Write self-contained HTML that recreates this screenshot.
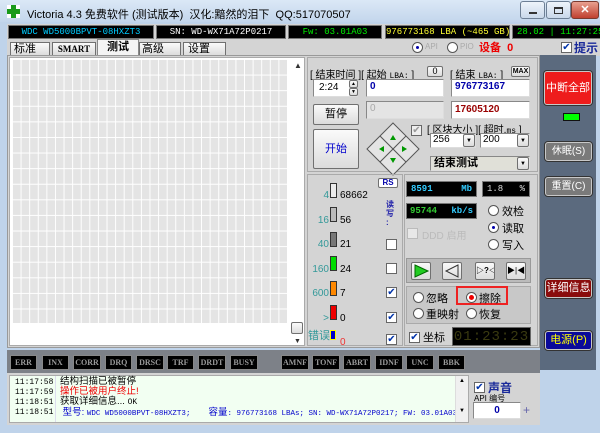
<!DOCTYPE html><html><head><meta charset="utf-8"><style>
*{margin:0;padding:0;box-sizing:border-box}
body{width:600px;height:433px;overflow:hidden;background:#bfd3ea;font-family:"Liberation Sans","Noto Sans CJK SC",sans-serif;font-size:11px;position:relative;color:#000}
.a{position:absolute}
.m{font-family:"Liberation Mono","Noto Sans CJK SC",monospace}
.blk{background:#000;border:1px solid #777;font-size:9px;text-align:center;line-height:12px;white-space:nowrap;overflow:hidden}
.btn{background:linear-gradient(#fafafa,#dcdcdc);border:1px solid #707070;border-radius:2px;text-align:center}
.inp{background:#fff;border:1px solid #888;border-right-color:#ddd;border-bottom-color:#ddd}
.rad{width:11px;height:11px;border:1px solid #555;border-radius:50%;background:#fff}
.rad.on::after{content:"";position:absolute;left:3px;top:3px;width:3px;height:3px;border-radius:50%;background:#00a}
.chk{width:11px;height:11px;border:1px solid #666;background:#fff;font-size:10px;line-height:9px;text-align:center;color:#03a}
.sb{border:1px solid #888;font-size:8px;text-align:center;line-height:13px;background:#000;color:#999;font-family:"Liberation Serif",serif;font-weight:bold;overflow:hidden}
.rb{border:1px solid #c8c8c8;border-radius:3px;color:#fff;text-align:center;font-size:11px;box-shadow:0 0 0 1px #333}
</style></head><body>
<div class="a" style="left:0;top:0;width:600px;height:22px;background:linear-gradient(#dbe8f6,#c3d6ec)"></div>
<div class="a" style="left:7px;top:5px;width:13px;height:13px;background:#fff"></div>
<div class="a" style="left:11px;top:5px;width:5px;height:13px;background:#1a9a1a"></div>
<div class="a" style="left:7px;top:9px;width:13px;height:5px;background:#1a9a1a"></div>
<div class="a" style="left:27px;top:6px;font-size:11px;white-space:nowrap">Victoria 4.3 免费软件 (测试版本)&nbsp; 汉化:黯然的泪下&nbsp; QQ:517070507</div>
<div class="a" style="left:520px;top:1px;width:25px;height:18px;border:1px solid #6d7f95;border-radius:3px;background:linear-gradient(#eef4fb,#c9d8ea)"><div class="a" style="left:8px;top:10px;width:8px;height:2px;background:#333"></div></div>
<div class="a" style="left:546px;top:1px;width:25px;height:18px;border:1px solid #6d7f95;border-radius:3px;background:linear-gradient(#eef4fb,#c9d8ea)"><div class="a" style="left:7px;top:5px;width:9px;height:7px;border:1px solid #333;border-top-width:2px"></div></div>
<div class="a" style="left:571px;top:1px;width:28px;height:18px;border:1px solid #7a3a30;border-radius:3px;background:linear-gradient(#e8a090,#c04030);color:#fff;font-weight:bold;text-align:center;line-height:16px;font-size:11px">✕</div>
<div class="a" style="left:7px;top:24px;width:593px;height:16px;background:#d4d4d4"></div>
<div class="a blk m" style="left:8px;top:25px;width:146px;height:14px;color:#0cf">WDC WD5000BPVT-08HXZT3</div>
<div class="a blk m" style="left:156px;top:25px;width:130px;height:14px;color:#fff">SN: WD-WX71A72P0217</div>
<div class="a blk m" style="left:288px;top:25px;width:94px;height:14px;color:#0e0">Fw: 03.01A03</div>
<div class="a blk m" style="left:385px;top:25px;width:125px;height:14px;color:#ff3">976773168 LBA (~465 GB)</div>
<div class="a blk m" style="left:512px;top:25px;width:90px;height:14px;color:#0e0;text-align:left;padding-left:4px">28.02 | 11:27:25</div>
<div class="a" style="left:7px;top:40px;width:593px;height:16px;background:#d4d4d4"></div>
<div class="a btn" style="left:10px;top:42px;width:40px;height:14px;text-align:left;padding-left:3px;line-height:13px;border-radius:0">标准</div>
<div class="a btn" style="left:52px;top:42px;width:44px;height:14px;line-height:13px;border-radius:0;font-family:'Liberation Serif';font-weight:bold;font-size:9px">SMART</div>
<div class="a" style="left:97px;top:39px;width:42px;height:17px;background:#f4f4f4;border:1px solid #888;border-bottom:none;text-align:center;line-height:14px;font-weight:bold">测试</div>
<div class="a btn" style="left:139px;top:42px;width:42px;height:14px;text-align:left;padding-left:2px;line-height:13px;border-radius:0">高级</div>
<div class="a btn" style="left:183px;top:42px;width:43px;height:14px;text-align:left;padding-left:4px;line-height:13px;border-radius:0">设置</div>
<div class="a rad on" style="left:412px;top:42px"></div><div class="a" style="left:425px;top:42px;font-size:8px;color:#aaa">API</div>
<div class="a rad" style="left:447px;top:42px"></div><div class="a" style="left:460px;top:42px;font-size:8px;color:#aaa">PIO</div>
<div class="a" style="left:479px;top:39px;color:#e00;font-weight:bold;font-size:11px">设备 &nbsp;0</div>
<div class="a chk" style="left:561px;top:42px">✔</div><div class="a" style="left:574px;top:39px;color:#1a2a9a;font-weight:bold;font-size:12px">提示</div>
<div class="a" style="left:7px;top:55px;width:533px;height:293px;background:#d4d4d4;border:1px solid #999"></div>
<div class="a" style="left:9px;top:57px;width:296px;height:289px;background:#fff;border:1px solid #aaa"></div>
<div class="a" style="left:12px;top:59px;width:275px;height:264px;background-color:#e4e4e4;background-image:linear-gradient(90deg,#fff 1px,transparent 1px),linear-gradient(#fff 1px,transparent 1px);background-size:8.6px 15.6px"></div>
<div class="a" style="left:294px;top:61px;font-size:8px;color:#333">▲</div>
<div class="a btn" style="left:291px;top:322px;width:12px;height:12px;border-radius:2px"></div>
<div class="a" style="left:294px;top:338px;font-size:7px;color:#333">▼</div>
<div class="a" style="left:307px;top:57px;width:231px;height:115px;border:1px solid #aaa"></div>
<div class="a" style="left:310px;top:66px;font-size:10px;white-space:nowrap">[ 结束时间 ][ 起始 <span class="m" style="font-size:8px">LBA:</span> ]</div>
<div class="a btn" style="left:427px;top:66px;width:16px;height:11px;font-size:9px;line-height:9px">0</div>
<div class="a" style="left:450px;top:66px;font-size:10px;white-space:nowrap">[ 结束 <span class="m" style="font-size:8px">LBA:</span> ]</div>
<div class="a btn" style="left:511px;top:66px;width:19px;height:11px;font-size:7px;line-height:9px;font-weight:bold">MAX</div>
<div class="a inp" style="left:313px;top:79px;width:45px;height:18px;padding:2px 5px;font-size:10px">2:24</div>
<div class="a btn" style="left:349px;top:80px;width:9px;height:8px;font-size:5px;line-height:6px">▲</div><div class="a btn" style="left:349px;top:88px;width:9px;height:8px;font-size:5px;line-height:6px">▼</div>
<div class="a inp" style="left:366px;top:79px;width:78px;height:18px;padding:1px 3px;color:#00a;font-weight:bold;font-size:10px">0</div>
<div class="a inp" style="left:451px;top:79px;width:79px;height:18px;padding:1px 3px;color:#00a;font-weight:bold;font-size:10px">976773167</div>
<div class="a inp" style="left:366px;top:101px;width:78px;height:18px;padding:1px 3px;color:#aaa;background:#e4e4e4;font-size:10px">0</div>
<div class="a inp" style="left:451px;top:101px;width:79px;height:18px;padding:2px 3px;color:#900;font-weight:bold;font-size:10px">17605120</div>
<div class="a btn" style="left:313px;top:104px;width:46px;height:21px;line-height:19px">暂停</div>
<div class="a btn" style="left:313px;top:129px;width:46px;height:40px;line-height:38px;color:#00c">开始</div>
<svg class="a" style="left:366px;top:122px" width="54" height="54"><polygon points="27,1 53,27 27,53 1,27" fill="#e4e4e4" stroke="#555"/><line x1="14" y1="14" x2="40" y2="40" stroke="#555"/><line x1="40" y1="14" x2="14" y2="40" stroke="#555"/><polygon points="27,13 30,18 24,18" fill="#090"/><polygon points="27,41 30,36 24,36" fill="#090"/><polygon points="13,27 18,24 18,30" fill="#090"/><polygon points="41,27 36,24 36,30" fill="#090"/></svg>
<div class="a chk" style="left:411px;top:125px;color:#999;background:#eee">✔</div>
<div class="a" style="left:427px;top:121px;white-space:nowrap;font-size:10px">[ 区块大小 ][ 超时,<span class="m" style="font-size:8px">ms</span> ]</div>
<div class="a inp" style="left:430px;top:133px;width:46px;height:15px;font-size:10px;padding-left:2px">256<div class="a btn" style="right:0;top:0;width:12px;height:13px;font-size:6px;line-height:12px">▼</div></div>
<div class="a inp" style="left:480px;top:133px;width:50px;height:15px;font-size:10px;padding-left:2px">200<div class="a btn" style="right:0;top:0;width:12px;height:13px;font-size:6px;line-height:12px">▼</div></div>
<div class="a inp" style="left:430px;top:156px;width:100px;height:15px;font-weight:bold;padding-left:3px;background:#e0e0d8;line-height:13px">结束测试<div class="a btn" style="right:0;top:0;width:12px;height:13px;font-size:6px;line-height:12px">▼</div></div>
<div class="a" style="left:307px;top:174px;width:96px;height:172px;border:1px solid #aaa"></div>
<div class="a btn" style="left:378px;top:178px;width:20px;height:10px;font-size:8px;line-height:8px;color:#00a;font-weight:bold;background:#fff">RS</div>
<div class="a" style="left:386px;top:200px;width:9px;font-size:8px;color:#22a;line-height:9px;font-weight:bold">读写<br>:</div>
<div class="a" style="left:330px;top:183px;width:7px;height:15px;border:1px solid #333;background:#ececec"></div>
<div class="a" style="left:330px;top:207px;width:7px;height:15px;border:1px solid #333;background:#bbb"></div>
<div class="a" style="left:330px;top:232px;width:7px;height:15px;border:1px solid #333;background:#777"></div>
<div class="a" style="left:330px;top:256px;width:7px;height:15px;border:1px solid #333;background:#0d0"></div>
<div class="a" style="left:330px;top:281px;width:7px;height:15px;border:1px solid #333;background:#f80"></div>
<div class="a" style="left:330px;top:305px;width:7px;height:15px;border:1px solid #333;background:#e00"></div>
<div class="a" style="left:330px;top:330px;width:6px;height:10px;background:#00c;border:1px solid #ff0"></div>
<div class="a" style="left:306px;top:184px;width:23px;text-align:right;color:#399;font-size:10px;line-height:24.5px">4<br>16<br>40<br>160<br>600<br>&gt;</div>
<div class="a" style="left:308px;top:327px;color:#399;font-size:11px">错误</div>
<div class="a" style="left:340px;top:184px;font-size:10px;line-height:24.5px">68662<br>56<br>21<br>24<br>7<br>0<br><span style="color:#e33">0</span></div>
<div class="a chk" style="left:386px;top:239px"></div>
<div class="a chk" style="left:386px;top:263px"></div>
<div class="a chk" style="left:386px;top:287px">✔</div>
<div class="a chk" style="left:386px;top:312px">✔</div>
<div class="a chk" style="left:386px;top:334px">✔</div>
<div class="a" style="left:404px;top:174px;width:134px;height:172px;border:1px solid #aaa"></div>
<div class="a blk m" style="left:406px;top:181px;width:71px;height:16px;color:#3cf;text-align:left;padding:1px 4px;font-weight:bold">8591<span style="float:right">Mb</span></div>
<div class="a blk m" style="left:482px;top:181px;width:48px;height:16px;color:#ddd;text-align:left;padding:1px 4px">1.8<span style="float:right">%</span></div>
<div class="a blk m" style="left:406px;top:203px;width:71px;height:16px;color:#3c3;text-align:left;padding:1px 3px;font-weight:bold">95744<span style="float:right;color:#3cf">kb/s</span></div>
<div class="a rad" style="left:488px;top:205px"></div><div class="a" style="left:502px;top:203px">效检</div>
<div class="a rad on" style="left:488px;top:222px"></div><div class="a" style="left:502px;top:220px">读取</div>
<div class="a rad" style="left:488px;top:239px"></div><div class="a" style="left:502px;top:237px">写入</div>
<div class="a chk" style="left:407px;top:228px;background:#e8e8e8;border-color:#bbb"></div><div class="a" style="left:422px;top:227px;color:#bbb;font-size:10px">DDD 启用</div>
<div class="a" style="left:406px;top:258px;width:125px;height:25px;background:#bbb;border:1px solid #999"></div>
<div class="a btn" style="left:411px;top:262px;width:20px;height:18px"><svg width="18" height="16"><polygon points="3,2 16,8 3,14" fill="#2c2" stroke="#060"/></svg></div>
<div class="a btn" style="left:442px;top:262px;width:20px;height:18px"><svg width="18" height="16"><polygon points="15,2 3,8 15,14" fill="none" stroke="#333"/></svg></div>
<div class="a btn" style="left:475px;top:262px;width:20px;height:18px;font-size:8px;font-weight:bold;line-height:16px;overflow:hidden;white-space:nowrap">▷?◁</div>
<div class="a btn" style="left:506px;top:262px;width:20px;height:18px;font-size:8px;line-height:16px;overflow:hidden;white-space:nowrap">▶|◀</div>
<div class="a" style="left:406px;top:286px;width:125px;height:38px;background:#c8c8c8;border:1px solid #aaa"></div>
<div class="a rad" style="left:413px;top:292px"></div><div class="a" style="left:426px;top:290px">忽略</div>
<div class="a" style="left:456px;top:286px;width:52px;height:19px;border:2px solid #e22"></div>
<div class="a rad" style="left:466px;top:292px"></div><div class="a" style="left:469px;top:295px;width:5px;height:5px;border-radius:50%;background:#e00"></div><div class="a" style="left:479px;top:290px">擦除</div>
<div class="a rad" style="left:413px;top:308px"></div><div class="a" style="left:426px;top:306px">重映射</div>
<div class="a rad" style="left:466px;top:308px"></div><div class="a" style="left:479px;top:306px">恢复</div>
<div class="a chk" style="left:409px;top:332px">✔</div><div class="a" style="left:423px;top:329px">坐标</div>
<div class="a m" style="left:452px;top:327px;width:79px;height:19px;background:#000;color:#3a3a10;font-size:14px;line-height:19px;text-align:center;letter-spacing:1px;border:1px solid #666">01:23:23</div>
<div class="a" style="left:540px;top:55px;width:56px;height:315px;background:#5b6a7e"></div>
<div class="a rb" style="left:544px;top:71px;width:48px;height:34px;line-height:32px;background:#ee1c1c">中断全部</div>
<div class="a" style="left:563px;top:113px;width:17px;height:8px;background:#0f0;border:1px solid #111"></div>
<div class="a rb" style="left:545px;top:142px;width:47px;height:19px;line-height:17px;background:#7a7a7a;font-size:10px">休眠(S)</div>
<div class="a rb" style="left:545px;top:177px;width:47px;height:19px;line-height:17px;background:#7a7a7a;font-size:10px">重置(C)</div>
<div class="a rb" style="left:545px;top:279px;width:47px;height:19px;line-height:17px;background:#8a0c0c">详细信息</div>
<div class="a rb" style="left:545px;top:331px;width:47px;height:19px;line-height:17px;background:#0a0a9a;color:#ff0">电源(P)</div>
<div class="a" style="left:7px;top:350px;width:533px;height:23px;background:#7d8188"></div>
<div class="a sb" style="left:10px;top:355px;width:27px;height:15px">ERR</div>
<div class="a sb" style="left:42px;top:355px;width:27px;height:15px">INX</div>
<div class="a sb" style="left:73px;top:355px;width:28px;height:15px">CORR</div>
<div class="a sb" style="left:105px;top:355px;width:27px;height:15px">DRQ</div>
<div class="a sb" style="left:136px;top:355px;width:28px;height:15px">DRSC</div>
<div class="a sb" style="left:167px;top:355px;width:27px;height:15px">TRF</div>
<div class="a sb" style="left:198px;top:355px;width:28px;height:15px">DRDT</div>
<div class="a sb" style="left:230px;top:355px;width:28px;height:15px">BUSY</div>
<div class="a sb" style="left:281px;top:355px;width:28px;height:15px">AMNF</div>
<div class="a sb" style="left:312px;top:355px;width:28px;height:15px">TONF</div>
<div class="a sb" style="left:343px;top:355px;width:28px;height:15px">ABRT</div>
<div class="a sb" style="left:375px;top:355px;width:28px;height:15px">IDNF</div>
<div class="a sb" style="left:406px;top:355px;width:28px;height:15px">UNC</div>
<div class="a sb" style="left:438px;top:355px;width:27px;height:15px">BBK</div>
<div class="a" style="left:7px;top:373px;width:533px;height:52px;background:#d4d4d4"></div>
<div class="a" style="left:9px;top:375px;width:460px;height:48px;background:#f2fff2;border:1px solid #aaa"></div>
<div class="a" style="left:55px;top:376px;width:1px;height:46px;background:#dde"></div>
<div class="a m" style="left:15px;top:378px;font-size:8px;line-height:10px">11:17:58<br>11:17:59<br>11:18:51<br>11:18:51</div>
<div class="a" style="left:60px;top:377px;font-size:9.5px;line-height:10px;white-space:nowrap">结构扫描已被暂停<br><span style="color:#e00">操作已被用户终止!</span><br>获取详细信息... <span class="m" style="font-size:8px">OK</span><br><span style="color:#00c">&nbsp;型号: <span class="m" style="font-size:7.5px">WDC WD5000BPVT-08HXZT3;&nbsp;&nbsp;&nbsp;&nbsp;</span>容量<span class="m" style="font-size:7.5px">: 976773168 LBAs; SN: WD-WX71A72P0217; FW: 03.01A03</span></span></div>
<div class="a" style="left:455px;top:376px;width:13px;height:46px;background:#f0f0f0;border-left:1px solid #ddd;font-size:6px;text-align:center;line-height:10px">▲<br><br><br>▼</div>
<div class="a chk" style="left:474px;top:382px">✔</div><div class="a" style="left:488px;top:379px;color:#1a2a9a;font-weight:bold;font-size:12px">声音</div>
<div class="a" style="left:474px;top:393px;font-size:8px">API 编号</div>
<div class="a inp" style="left:473px;top:402px;width:48px;height:17px;text-align:center;font-size:10px;font-weight:bold;color:#00a;line-height:15px">0</div>
<div class="a" style="left:523px;top:403px;color:#66a;font-size:12px">+</div>
</body></html>
